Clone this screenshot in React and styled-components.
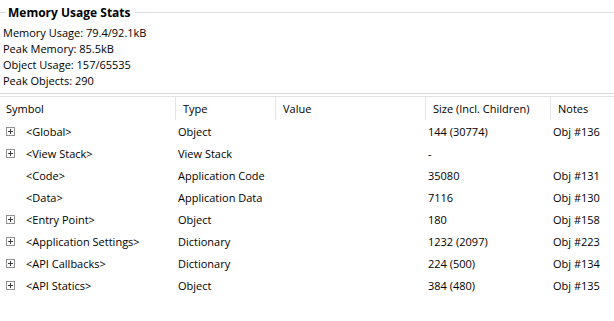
import React from 'react';
import styled, { createGlobalStyle } from 'styled-components';

const GlobalStyle = createGlobalStyle`
    body {
        margin: 0;
        background: #ffffff;
        font-family: "Open Sans", "Noto Sans", sans-serif;
        font-size: 11px;
        color: #000000;
    }
`;

const Page = styled.div`
    width: 614px;
    height: 321px;
    overflow: hidden;
    background: #ffffff;
`;

const Group = styled.section`
    height: 94px;
    border-bottom: 1px solid #dcdcdc;
    box-sizing: border-box;
`;

const GroupTitleRow = styled.div`
    display: flex;
    align-items: center;
    height: 25px;

    &::before, &::after {
        content: '';
        height: 1px;
        background: #dcdcdc;
    }

    &::before {
        width: 6px;
        margin-right: 2px;
    }

    &::after {
        flex: 1;
        margin-left: 4px;
    }
`;

const GroupTitle = styled.h2`
    margin: 0;
    font-size: 12px;
    font-weight: 700;
    line-height: 16px;
`;

const StatList = styled.div`
    padding-left: 3px;
`;

const Stat = styled.div`
    line-height: 16px;
    white-space: nowrap;
`;

const List = styled.div`
    margin-top: 2px;
    border-top: 1px solid #e3e3e3;
`;

const Columns = styled.div`
    display: grid;
    grid-template-columns: 175px 100px 150px 125px 1fr;
`;

const HeaderRow = styled(Columns)`
    height: 23px;
    align-items: stretch;
`;

const HeaderCell = styled.div`
    display: flex;
    align-items: center;
    padding-left: ${props => (props.first ? '6px' : '7px')};
    border-left: ${props => (props.first ? 'none' : '1px solid #e5e5e5')};
    white-space: nowrap;
`;

const Row = styled(Columns)`
    height: 22px;
    align-items: center;
`;

const Cell = styled.div`
    padding-left: 3px;
    white-space: nowrap;
    overflow: hidden;
`;

const SymbolCell = styled.div`
    display: flex;
    align-items: center;
    padding-left: 6px;
    white-space: nowrap;
`;

const ExpanderSlot = styled.span`
    display: inline-flex;
    width: 9px;
    height: 9px;
    margin-right: 11px;
`;

const Expander = () => (
    <svg width="9" height="9" viewBox="0 0 9 9">
        <rect x="0.5" y="0.5" width="8" height="8" fill="#ffffff" stroke="#919191" />
        <path d="M2 4.5h5M4.5 2v5" stroke="#3c3c3c" />
    </svg>
);

const stats = [
    'Memory Usage: 79.4/92.1kB',
    'Peak Memory: 85.5kB',
    'Object Usage: 157/65535',
    'Peak Objects: 290',
];

const rows = [
    { symbol: '<Global>', type: 'Object', size: '144 (30774)', notes: 'Obj #136', expand: true },
    { symbol: '<View Stack>', type: 'View Stack', size: '-', notes: '', expand: true },
    { symbol: '<Code>', type: 'Application Code', size: '35080', notes: 'Obj #131' },
    { symbol: '<Data>', type: 'Application Data', size: '7116', notes: 'Obj #130' },
    { symbol: '<Entry Point>', type: 'Object', size: '180', notes: 'Obj #158', expand: true },
    { symbol: '<Application Settings>', type: 'Dictionary', size: '1232 (2097)', notes: 'Obj #223', expand: true },
    { symbol: '<API Callbacks>', type: 'Dictionary', size: '224 (500)', notes: 'Obj #134', expand: true },
    { symbol: '<API Statics>', type: 'Object', size: '384 (480)', notes: 'Obj #135', expand: true },
];

const headers = ['Symbol', 'Type', 'Value', 'Size (Incl. Children)', 'Notes'];

const App = () => (
    <Page>
        <GlobalStyle />
        <Group>
            <GroupTitleRow>
                <GroupTitle>Memory Usage Stats</GroupTitle>
            </GroupTitleRow>
            <StatList>
                {stats.map(s => <Stat key={s}>{s}</Stat>)}
            </StatList>
        </Group>
        <List>
            <HeaderRow>
                {headers.map((h, i) => (
                    <HeaderCell key={h} first={i === 0}>{h}</HeaderCell>
                ))}
            </HeaderRow>
            {rows.map(r => (
                <Row key={r.symbol}>
                    <SymbolCell>
                        <ExpanderSlot>{r.expand && <Expander />}</ExpanderSlot>
                        {r.symbol}
                    </SymbolCell>
                    <Cell>{r.type}</Cell>
                    <Cell />
                    <Cell>{r.size}</Cell>
                    <Cell>{r.notes}</Cell>
                </Row>
            ))}
        </List>
    </Page>
);

export default App;
